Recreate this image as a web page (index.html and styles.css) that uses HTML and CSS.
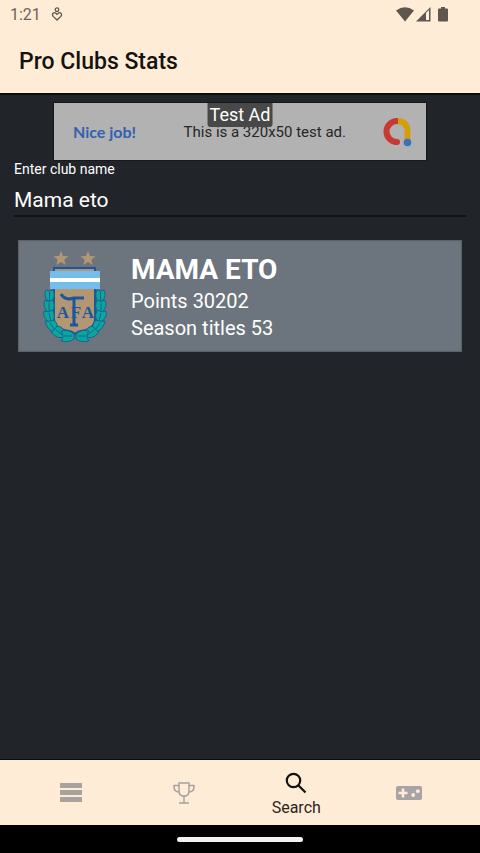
FILE: index.html
```html
<!DOCTYPE html>
<html lang="en">
<head>
    <meta charset="UTF-8">
    <meta name="viewport" content="width=device-width, initial-scale=1.0">
    <title>Pro Clubs Stats</title>
    <link rel="stylesheet" href="styles.css">
</head>
<body>
    <!-- status bar -->
    <div class="status-bar">
        <span class="time">1:21</span>
        <svg class="heart-icon" viewBox="0 0 12 14" fill="none" stroke="#5f574d" stroke-width="1.3">
            <circle cx="6" cy="2.7" r="1.8"/>
            <path d="M6 13 L2.2 9.4 C.4 7.4 2.6 4.6 4.8 6.2 L6 7.4 L7.2 6.2 C9.4 4.6 11.6 7.4 9.8 9.4 Z"/>
        </svg>
        <div class="status-icons">
            <svg width="18" height="15" viewBox="0 0 18 15" fill="#5f574d">
                <path d="M0 3.6 Q9 -3 18 3.6 L9 14.5 Z"/>
            </svg>
            <svg width="15" height="15" viewBox="0 0 15 15">
                <path d="M0 14.5 L14.5 0 V14.5 Z" fill="#5f574d"/>
                <path d="M10 6 L13 3 V13 H10 Z" fill="#fff4e4"/>
            </svg>
            <svg class="battery" width="10" height="15" viewBox="0 0 10 15" fill="#5f574d">
                <path d="M3 0 H7 V1.5 H9 Q10 1.5 10 2.5 V13.5 Q10 14.5 9 14.5 H1 Q0 14.5 0 13.5 V2.5 Q0 1.5 1 1.5 H3 Z"/>
            </svg>
        </div>
    </div>

    <header class="header">
        <h1 class="title">Pro Clubs Stats</h1>
    </header>

    <main class="content">
        <!-- ad banner -->
        <div class="ad">
            <span class="ad-label">Test Ad</span>
            <span class="ad-praise">Nice job!</span>
            <span class="ad-text">This is a 320x50 test ad.</span>
            <svg class="ad-logo" viewBox="0 0 30 30" fill="none" stroke-width="6">
                <path d="M15 4 Q25.5 4 25.5 15 V25" stroke="#d29f0b"/>
                <path d="M16 4 H15 A10.5 10.5 0 0 0 15 25" stroke="#c63a30"/>
                <circle cx="15" cy="25" r="3" fill="#c63a30"/>
                <circle cx="25.5" cy="25.5" r="3.8" fill="#3b6fc4"/>
            </svg>
        </div>

        <!-- search form -->
        <form class="search-form">
            <label class="search-label" for="club">Enter club name</label>
            <input class="search-input" type="text" id="club" value="Mama eto">
        </form>

        <!-- search result -->
        <section class="club">
            <svg class="crest" viewBox="0 0 64 92">
                <g fill="#b29772">
                    <path id="star" d="M18 0 L20 5 L25.500 5.300 L21.300 8.800 L22.700 14 L18 11 L13.300 14 L14.700 8.800 L10.500 5.300 L16 5 Z"/>
                    <use href="#star" x="27"/>
                </g>
                <path d="M11 17 H52 V68 Q52 76 43 79 Q35 80 32 83 Q29 80 21 79 Q11 76 11 68 Z" fill="#b29772" stroke="#1c56a0" stroke-width="2"/>
                <path d="M7 20 H57 V38 H7 Z" fill="#74bdec"/>
                <path d="M7 27 H57 V31 H7 Z" fill="#ffffff"/>
                <!-- laurel leaves -->
                <g id="laurel" fill="#0aa898" stroke="#17609f" stroke-width="1">
                    <path d="M3 39 Q7 41 10 39 Q13 45 9 50 H5 Q0 45 3 39 Z M6.500 41 V49"/>
                    <path d="M2 49 Q6 52 10 49 Q13 56 9 61 H5 Q-1 56 2 49 Z M6 52 V60"/>
                    <path d="M1 60 Q5 62 10 59 Q13 65 10 71 H6 Q-1 66 1 60 Z M6 62 L8 70"/>
                    <path d="M2 70 Q7 71 11 69 Q16 74 14 80 L10 81 Q3 77 2 70 Z M7 72 L12 79"/>
                    <path d="M8 81 Q12 79 14 75 Q22 76 23 85 Q15 90 8 81 Z M13 79 L21 85"/>
                    <path d="M18 90 Q22 85 18 80 Q26 78 31 83 V88 Q26 92 18 90 Z M21 85 H29"/>
                </g>
                <use href="#laurel" transform="translate(64 0) scale(-1 1)"/>
                <!-- monogram -->
                <g class="crest-text" fill="#1c56a0">
                    <text x="20" y="67">A</text>
                    <text x="33" y="67">F</text>
                    <text x="45" y="67">A</text>
                </g>
                <path d="M18 43 Q22 50 31 47 H41 M31 48 V73 M27 74 H35" fill="none" stroke="#1c56a0" stroke-width="3"/>
            </svg>
            <div class="club-info">
                <h2 class="club-name">MAMA ETO</h2>
                <p>Points 30202</p>
                <p>Season titles 53</p>
            </div>
        </section>
    </main>

    <!-- bottom navigation -->
    <nav class="nav">
        <a class="nav-item" href="#list" aria-label="List">
            <svg width="22" height="22" viewBox="0 0 22 22" fill="#a8a29e">
                <path d="M0 1 H22 V6 H0 Z M0 8 H22 V13 H0 Z M0 15 H22 V20 H0 Z"/>
            </svg>
        </a>
        <a class="nav-item" href="#trophies" aria-label="Trophies">
            <svg width="22" height="22" viewBox="0 0 22 22" fill="none" stroke="#a8a29e" stroke-width="1.5">
                <path d="M6 1 H16 V9 Q16 14 11 14 Q6 14 6 9 Z M11 14 V21 M6 21 H16"/>
                <path d="M6 3.500 H1 Q.5 9.500 6 10 M16 3.500 H21 Q21.500 9.500 16 10"/>
            </svg>
        </a>
        <a class="nav-item active" href="#search">
            <svg width="22" height="22" viewBox="0 0 22 22" fill="none" stroke="#14120f" stroke-width="2.2">
                <circle cx="8.500" cy="8.500" r="6.700"/>
                <path d="M13.300 13.300 L20.500 20.500"/>
            </svg>
            <span>Search</span>
        </a>
        <a class="nav-item" href="#games" aria-label="Games">
            <svg width="26" height="14" viewBox="0 0 26 14">
                <rect width="26" height="14" rx="2" fill="#a8a4a6"/>
                <path d="M7 2.500 V11.500 M2.500 7 H11.500" stroke="#ffecd7" stroke-width="2.600"/>
                <circle cx="17.200" cy="9" r="1.900" fill="#ffecd7"/>
                <circle cx="21.800" cy="5.200" r="1.900" fill="#ffecd7"/>
            </svg>
        </a>
    </nav>
    <div class="gesture-bar"><div class="gesture-pill"></div></div>
</body>
</html>
```
FILE: styles.css
```css
*{
    margin: 0;
    padding: 0;
    box-sizing: border-box;
}
body{
    display: flex;
    flex-direction: column;
    min-height: 100vh;
    font-family: Roboto, sans-serif;
    color: #ffffff;
    background: #212529;
}
svg{
    display: block;
    flex-shrink: 0;
}
.status-bar{
    display: flex;
    align-items: center;
    height: 28px;
    padding: 0 32px 0 10px;
    background: #ffecd7;
}
.time{
    font-size: 16px;
    color: #6b6257;
}
.heart-icon{
    width: 12px;
    height: 14px;
    margin-left: 10px;
}
.status-icons{
    display: flex;
    gap: 2px;
    margin-left: auto;
}
.battery{
    margin-left: 5px;
}
.header{
    padding: 18px 19px 16px;
    background: #ffecd7;
    border-bottom: 2px solid #0c0d0f;
}
.title{
    font-size: 23px;
    line-height: 31px;
    font-weight: 500;
    color: #14120f;
}
.content{
    flex: 1;
    padding: 7px 14px;
}
.ad{
    position: relative;
    display: flex;
    align-items: center;
    max-width: 374px;
    height: 59px;
    margin: 0 auto;
    padding: 0 14px 0 19px;
    background: #b2b2b2;
    border: 1px solid #17191c;
}
.ad-label{
    position: absolute;
    top: 0;
    left: 50%;
    transform: translateX(-50%);
    padding: 0 2px;
    font-size: 18px;
    line-height: 24px;
    white-space: nowrap;
    background: #484848;
    border-radius: 0 0 3px 3px;
}
.ad-praise{
    font-family: Lato, sans-serif;
    font-size: 16px;
    font-weight: 700;
    color: #3261b3;
}
.ad-text{
    margin-left: auto;
    font-size: 15px;
    color: #262626;
}
.ad-logo{
    width: 30px;
    height: 30px;
    margin-left: 36px;
}
.search-label{
    display: block;
    font-size: 14px;
    line-height: 16px;
}
.search-input{
    width: 100%;
    height: 40px;
    padding-top: 8px;
    font-family: inherit;
    font-size: 21px;
    color: #ffffff;
    background: none;
    border: none;
    border-bottom: 2px solid #101215;
    outline: none;
}
.club{
    display: flex;
    align-items: center;
    margin: 23px 4px 0;
    padding: 10px 24px 8px;
    background: #6c757d;
    border: 1px solid #596066;
}
.crest{
    width: 64px;
    height: 92px;
}
.crest-text{
    font-family: "Liberation Serif", serif;
    font-size: 17px;
    font-weight: bold;
    text-anchor: middle;
}
.club-info{
    margin-left: 24px;
    font-size: 20px;
    line-height: 27px;
}
.club-name{
    font-size: 28px;
    line-height: 36px;
}
.nav{
    display: flex;
    height: 66px;
    padding: 0 15px;
    background: #ffecd7;
    border-top: 1px solid #0c0d0f;
}
.nav-item{
    display: flex;
    flex: 1;
    flex-direction: column;
    align-items: center;
    justify-content: center;
    gap: 5px;
    font-size: 16px;
    line-height: 18px;
    color: #2a2621;
    text-decoration: none;
}
.active{
    padding-top: 3px;
}
.gesture-bar{
    display: flex;
    align-items: center;
    justify-content: center;
    height: 28px;
    background: #000000;
}
.gesture-pill{
    width: 126px;
    height: 5px;
    border-radius: 3px;
    background: #f2f2f2;
}
```
